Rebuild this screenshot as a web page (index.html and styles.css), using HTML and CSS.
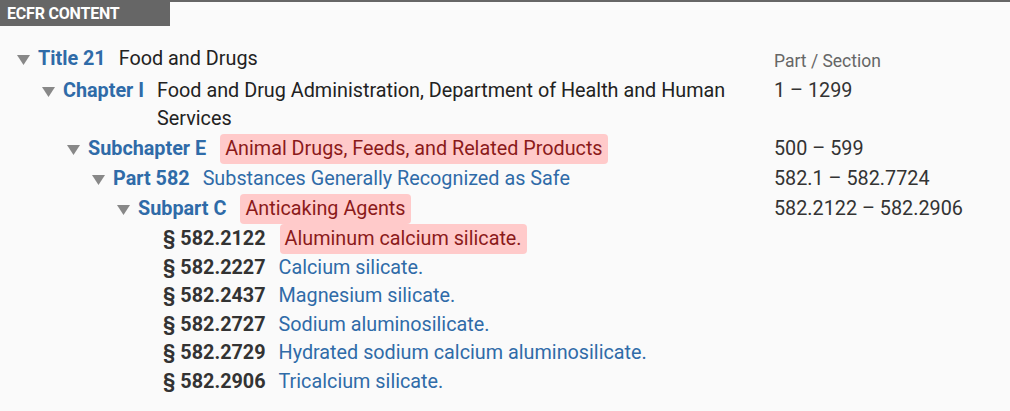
FILE: index.html
```html
<!DOCTYPE html>
<html lang="en">
<head>
<meta charset="utf-8">
<title>ECFR Content</title>
<link rel="stylesheet" href="styles.css">
</head>
<body>
<div class="panel">
  <div class="tab-bar"><div class="tab">ECFR CONTENT</div></div>
  <div class="tree">
    <div class="row lvl0">
      <div class="node">
        <svg class="tri" viewBox="0 0 13 10"><polygon points="0,0 13,0 6.5,10"/></svg>
        <span class="label">Title 21</span>
        <span class="desc plain">Food and Drugs</span>
      </div>
      <div class="range head">Part / Section</div>
    </div>
    <div class="row lvl1">
      <div class="node">
        <svg class="tri" viewBox="0 0 13 10"><polygon points="0,0 13,0 6.5,10"/></svg>
        <span class="label">Chapter I</span>
        <span class="desc plain">Food and Drug Administration, Department of Health and Human Services</span>
      </div>
      <div class="range">1 – 1299</div>
    </div>
    <div class="row lvl2">
      <div class="node">
        <svg class="tri" viewBox="0 0 13 10"><polygon points="0,0 13,0 6.5,10"/></svg>
        <span class="label">Subchapter E</span>
        <span class="desc hl">Animal Drugs, Feeds, and Related Products</span>
      </div>
      <div class="range">500 – 599</div>
    </div>
    <div class="row lvl3">
      <div class="node">
        <svg class="tri" viewBox="0 0 13 10"><polygon points="0,0 13,0 6.5,10"/></svg>
        <span class="label">Part 582</span>
        <span class="desc link">Substances Generally Recognized as Safe</span>
      </div>
      <div class="range">582.1 – 582.7724</div>
    </div>
    <div class="row lvl4">
      <div class="node">
        <svg class="tri" viewBox="0 0 13 10"><polygon points="0,0 13,0 6.5,10"/></svg>
        <span class="label">Subpart C</span>
        <span class="desc hl">Anticaking Agents</span>
      </div>
      <div class="range">582.2122 – 582.2906</div>
    </div>
    <div class="row lvl5 sec first">
      <div class="node">
        <span class="tri-space"></span>
        <span class="label sect">§ 582.2122</span>
        <span class="desc hl">Aluminum calcium silicate.</span>
      </div>
      <div class="range"></div>
    </div>
    <div class="row lvl5 sec">
      <div class="node">
        <span class="tri-space"></span>
        <span class="label sect">§ 582.2227</span>
        <span class="desc link">Calcium silicate.</span>
      </div>
      <div class="range"></div>
    </div>
    <div class="row lvl5 sec">
      <div class="node">
        <span class="tri-space"></span>
        <span class="label sect">§ 582.2437</span>
        <span class="desc link">Magnesium silicate.</span>
      </div>
      <div class="range"></div>
    </div>
    <div class="row lvl5 sec">
      <div class="node">
        <span class="tri-space"></span>
        <span class="label sect">§ 582.2727</span>
        <span class="desc link">Sodium aluminosilicate.</span>
      </div>
      <div class="range"></div>
    </div>
    <div class="row lvl5 sec">
      <div class="node">
        <span class="tri-space"></span>
        <span class="label sect">§ 582.2729</span>
        <span class="desc link">Hydrated sodium calcium aluminosilicate.</span>
      </div>
      <div class="range"></div>
    </div>
    <div class="row lvl5 sec">
      <div class="node">
        <span class="tri-space"></span>
        <span class="label sect">§ 582.2906</span>
        <span class="desc link">Tricalcium silicate.</span>
      </div>
      <div class="range"></div>
    </div>
  </div>
</div>
</body>
</html>
```

FILE: styles.css
```css
html, body {
  margin: 0;
  padding: 0;
  background: #fafafa;
}
body {
  font-family: Roboto, "Liberation Sans", Arial, sans-serif;
  font-size: 19.8px;
  color: #222;
}
.tab-bar {
  border-top: 2px solid #666;
  height: 24px;
}
.tab {
  width: 163px;
  height: 24px;
  margin-top: -2px;
  padding: 2px 0 0 7px;
  background: #666;
  color: #fff;
  font-weight: 700;
  font-size: 16px;
  line-height: 24px;
  box-sizing: content-box;
  letter-spacing: -0.2px;
}
.tree {
  padding: 18px 0 0 17px;
}
.row {
  display: grid;
  grid-template-columns: minmax(0, 1fr) 236px;
  column-gap: 20px;
}
.node {
  display: flex;
  align-items: flex-start;
}
.lvl1 .node { padding-left: 25px; }
.lvl2 .node { padding-left: 50px; }
.lvl3 .node { padding-left: 75px; }
.lvl4 .node { padding-left: 100px; }
.lvl5 .node { padding-left: 125px; }
.tri {
  flex: none;
  width: 13px;
  height: 10px;
  margin-top: 11px;
  margin-right: 8px;
  fill: #888;
}
.tri-space {
  flex: none;
  width: 21px;
}
.label {
  flex: none;
  font-weight: 700;
  color: #2f6ba8;
  line-height: 30px;
  margin-right: 8px;
}
.label.sect {
  color: #333;
}
.desc {
  padding: 1px 5px;
  line-height: 28px;
  border-radius: 4px;
}
.plain { color: #222; }
.link { color: #2f6ba8; }
.hl {
  margin-left: 6px;
  background: #ffcaca;
  color: #8b1a1a;
}
.range {
  line-height: 30px;
  color: #333;
}
.range.head {
  color: #666;
  font-size: 17.5px;
  padding-top: 2px;
}
.sec .label { line-height: 28.4px; }
.sec .desc { padding: 0 5px; line-height: 28.4px; }
.sec.first .label { line-height: 30px; }
.sec.first .desc { padding: 1px 5px; line-height: 28px; }
```
